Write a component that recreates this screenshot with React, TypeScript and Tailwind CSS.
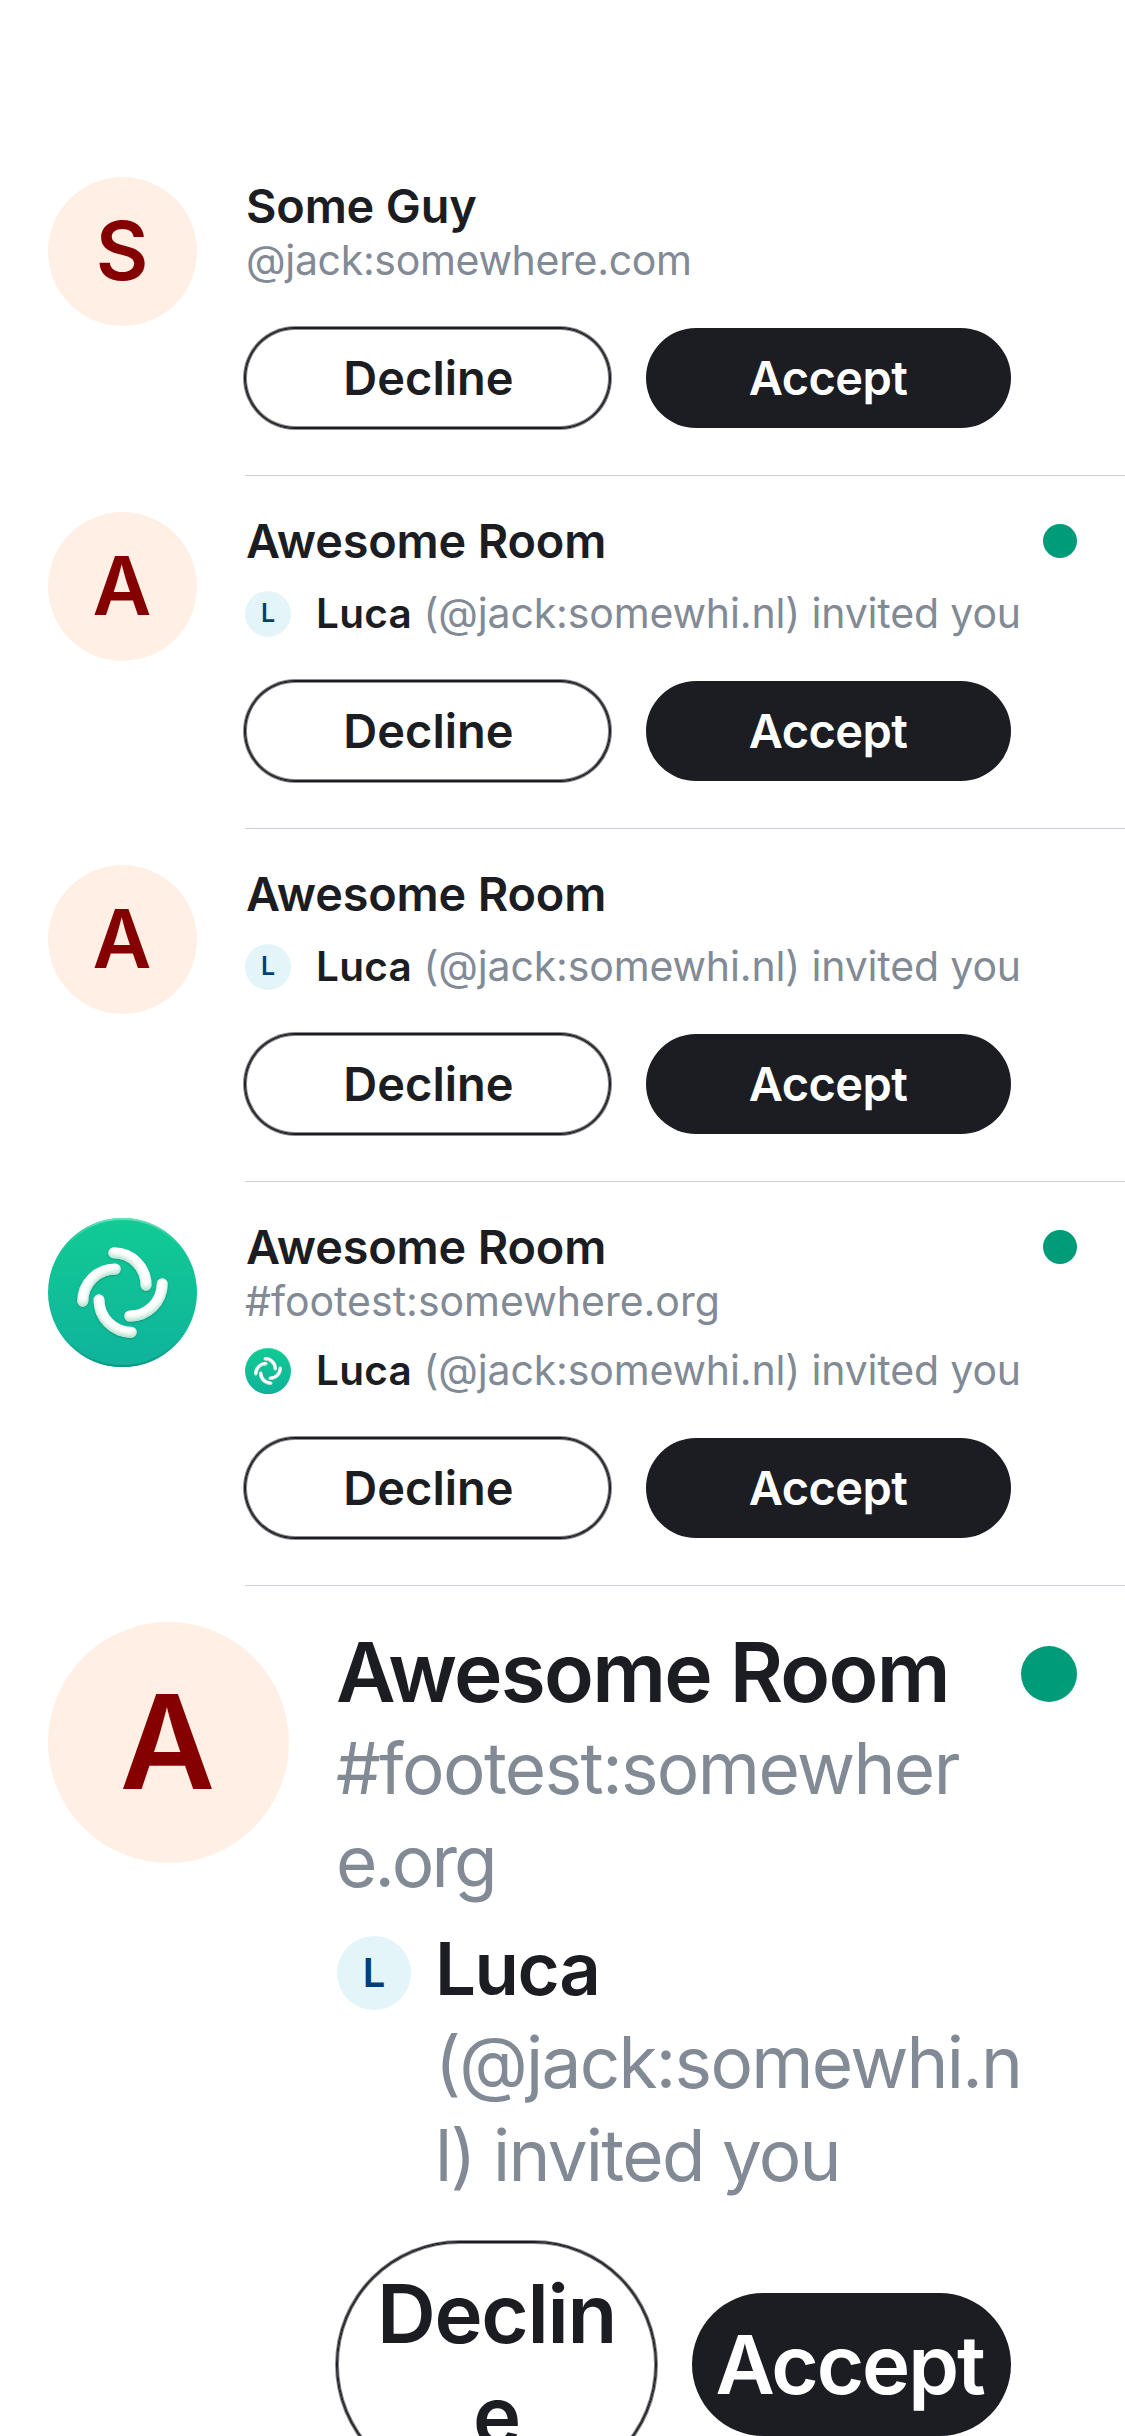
import React from "react";

type Invite = {
  initial?: string;
  title: string;
  subtitle?: string;
  inviter?: "letter" | "logo";
  unread?: boolean;
};

const invites: Invite[] = [
  { initial: "S", title: "Some Guy", subtitle: "@jack:somewhere.com" },
  { initial: "A", title: "Awesome Room", inviter: "letter", unread: true },
  { initial: "A", title: "Awesome Room", inviter: "letter" },
  { title: "Awesome Room", subtitle: "#footest:somewhere.org", inviter: "logo", unread: true },
];

function Logo({ id, className }: { id: string; className: string }) {
  const arc = "M 65.8 34.8 A 32.3 32.3 0 0 1 98 67.2";
  return (
    <svg viewBox="0 0 149 149" className={className}>
      <defs>
        <linearGradient id={`${id}-bg`} x1="0" y1="0" x2="0" y2="1">
          <stop offset="0" stopColor="#11cb94" />
          <stop offset="1" stopColor="#0fb39b" />
        </linearGradient>
        <linearGradient id={`${id}-rim`} x1="0" y1="0" x2="0" y2="1">
          <stop offset="0" stopColor="#6be0bc" />
          <stop offset="0.25" stopColor="#14c696" stopOpacity="0" />
          <stop offset="0.75" stopColor="#0fb39b" stopOpacity="0" />
          <stop offset="1" stopColor="#0b9582" />
        </linearGradient>
        <filter id={`${id}-fx`} x="-20%" y="-20%" width="140%" height="140%">
          <feGaussianBlur in="SourceAlpha" stdDeviation="2.2" result="soft" />
          <feOffset in="soft" dy="-3" result="up" />
          <feComposite in="SourceAlpha" in2="up" operator="out" result="edge" />
          <feFlood floodColor="#6fd3ac" floodOpacity="0.7" />
          <feComposite in2="edge" operator="in" result="shade" />
          <feGaussianBlur in="SourceAlpha" stdDeviation="1" result="s2" />
          <feOffset in="s2" dy="1.2" result="s3" />
          <feFlood floodColor="#067a62" floodOpacity="0.6" />
          <feComposite in2="s3" operator="in" result="drop" />
          <feMerge>
            <feMergeNode in="drop" />
            <feMergeNode in="SourceGraphic" />
            <feMergeNode in="shade" />
          </feMerge>
        </filter>
      </defs>
      <circle cx="74.5" cy="74.5" r="74.5" fill={`url(#${id}-bg)`} />
      <circle cx="74.5" cy="74.5" r="73.5" fill="none" stroke={`url(#${id}-rim)`} strokeWidth="2" />
      <g fill="none" stroke="#fff" strokeWidth="11" strokeLinecap="round" filter={`url(#${id}-fx)`}>
        <path d={arc} />
        <path d={arc} transform="rotate(90 74.5 74.5)" />
        <path d={arc} transform="rotate(180 74.5 74.5)" />
        <path d={arc} transform="rotate(270 74.5 74.5)" />
      </g>
    </svg>
  );
}

function InviteRow({ invite, index }: { invite: Invite; index: number }) {
  const { initial, title, subtitle, inviter, unread } = invite;
  return (
    <div className="flex gap-12 pl-12 pt-9">
      {initial ? (
        <div className="flex size-[149px] shrink-0 items-center justify-center rounded-full bg-[#ffefe4] pr-px text-[81px] font-semibold text-[#850000]">
          {initial}
        </div>
      ) : (
        <Logo id={`room-${index}`} className="size-[149px] shrink-0" />
      )}
      <div className="flex-1 border-b border-[#cdd2da] pb-[47px]">
        <div className="flex justify-between pr-12 pl-px">
          <h2 className="text-[46.8px] leading-[58px] font-semibold tracking-[-0.15px]">{title}</h2>
          {unread && <span className="mt-3 size-[34px] rounded-full bg-[#009b78]" />}
        </div>
        {subtitle && (
          <p
            className={
              inviter
                ? "text-[41px] leading-[51px] text-[#818a95]"
                : "pl-px text-[41px] leading-[51px] tracking-[-0.32px] text-[#818a95]"
            }
          >
            {subtitle}
          </p>
        )}
        {inviter && (
          <div className="mt-[21px] flex h-[46px] gap-[25px]">
            {inviter === "letter" ? (
              <span className="flex size-[46px] items-center justify-center rounded-full bg-[#e3f5f8] text-[25px] font-semibold text-[#00407a]">
                L
              </span>
            ) : (
              <Logo id={`user-${index}`} className="size-[46px]" />
            )}
            <p className="text-[41px] leading-[44px] tracking-[-0.15px] whitespace-nowrap text-[#818a95]">
              <span className="text-[40.5px] font-semibold tracking-[0.3px] text-[#1b1d22]">Luca</span>{" "}
              (@jack:somewhi.nl) invited you
            </p>
          </div>
        )}
        <div
          className={
            inviter
              ? "mt-11 grid grid-cols-2 gap-9 pr-[114px] text-[47px] leading-[58px] font-semibold"
              : "mt-[42px] grid grid-cols-2 gap-9 pr-[114px] text-[47px] leading-[58px] font-semibold"
          }
        >
          <button className="h-[100px] rounded-full pl-[2px] shadow-[0_0_0_1px_#1b1d22,0_0_0_2px_#1b1d2280,inset_0_0_0_1px_#1b1d22,inset_0_0_0_2px_#1b1d2280]">
            Decline
          </button>
          <button className="h-[100px] rounded-full bg-[#1b1d22] pr-px tracking-[-0.6px] text-white">Accept</button>
        </div>
      </div>
    </div>
  );
}

function LargeInviteRow() {
  return (
    <div className="flex gap-12 pl-12 pt-9">
      <div className="flex size-[241px] shrink-0 items-center justify-center rounded-full bg-[#ffefe4] pr-[2px] text-[131px] font-semibold text-[#850000]">
        A
      </div>
      <div className="flex-1">
        <div className="flex justify-between pr-12">
          <h2 className="-ml-px h-[100px] text-[82px] leading-[102px] font-semibold tracking-[-1.8px] whitespace-nowrap">
            Awesome Room
          </h2>
          <span className="mt-6 size-14 shrink-0 rounded-full bg-[#009b78]" />
        </div>
        <p className="-ml-px text-[71px] leading-[93px] tracking-[-1.6px] text-[#818a95]">
          #footest:somewher
          <br />
          <span className="tracking-[-3px]">e.org</span>
        </p>
        <div className="mt-[15px] flex gap-6">
          <span className="mt-[13px] flex size-[74px] shrink-0 items-center justify-center rounded-full bg-[#e3f5f8] text-[40px] font-semibold text-[#00407a]">
            L
          </span>
          <p className="-mt-px mb-px text-[71px] leading-[93px] tracking-[-1.7px] whitespace-nowrap text-[#818a95]">
            <span className="text-[72.5px] font-semibold tracking-[-1.4px] text-[#1b1d22]">Luca</span>
            <br />
            (@jack:somewhi.n
            <br />
            <span className="tracking-[-1.7px]">l) invited you</span>
          </p>
        </div>
        <div className="mt-[39px] grid grid-cols-2 items-center gap-9 pr-[114px] text-[81.5px] leading-[102px] font-semibold">
          <button className="h-[245px] rounded-full tracking-[-1.3px] shadow-[0_0_0_1px_#1b1d22,0_0_0_2px_#1b1d2280,inset_0_0_0_1px_#1b1d22,inset_0_0_0_2px_#1b1d2280]">
            Declin
            <br />e
          </button>
          <button className="h-[143px] rounded-full bg-[#1b1d22] pr-[4px] tracking-[-2.1px] text-white">Accept</button>
        </div>
      </div>
    </div>
  );
}

export default function App() {
  return (
    <main className="h-[2436px] w-[1125px] overflow-hidden bg-white pt-[141px] font-['Inter',sans-serif] text-[#1b1d22]">
      {invites.map((invite, i) => (
        <InviteRow key={i} invite={invite} index={i} />
      ))}
      <LargeInviteRow />
    </main>
  );
}
